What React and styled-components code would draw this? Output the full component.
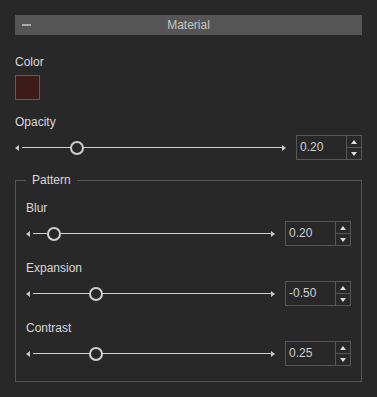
import React from "react";
import styled, { createGlobalStyle } from "styled-components";

const GlobalStyle = createGlobalStyle`
  html, body {
    margin: 0;
    background: #282828;
  }

  body {
    font-family: "Liberation Sans", Arial, sans-serif;
    font-size: 12px;
    color: #d8d8d8;
  }
`;

const Panel = styled.div`
  width: 377px;
  height: 397px;
  box-sizing: border-box;
  padding: 15px;
  display: flex;
  flex-direction: column;
`;

const Header = styled.div`
  height: 20px;
  background: #555555;
  display: grid;
  grid-template-columns: 1fr auto 1fr;
  align-items: center;
  line-height: 20px;
  color: #c4c4c4;
`;

const Collapse = styled.span`
  width: 9px;
  height: 2px;
  margin-left: 7px;
  background: #ababab;
`;

const Body = styled.div`
  display: flex;
  flex-direction: column;
  gap: 15px;
  padding-top: 20px;
`;

const Field = styled.div`
  display: flex;
  flex-direction: column;
`;

const Label = styled.div`
  line-height: 14px;
  margin-bottom: 6px;
`;

const Swatch = styled.div`
  width: 25px;
  height: 25px;
  box-sizing: border-box;
  border: 1px solid #5c5c5c;
  background: ${(p) => p.color};
`;

const Row = styled.div`
  display: flex;
  align-items: center;
  gap: 10px;
  height: 25px;
`;

const SliderWrap = styled.div`
  flex: 1;
  display: flex;
  align-items: center;
  height: 25px;
`;

const Arrow = styled.span`
  width: 0;
  height: 0;
  border-top: 3.5px solid transparent;
  border-bottom: 3.5px solid transparent;
  ${(p) =>
    p.dir === "left"
      ? "border-right: 4px solid #c8c8c8; margin-right: 3px;"
      : "border-left: 4px solid #c8c8c8;"}
`;

const Track = styled.div`
  flex: 1;
  position: relative;
  height: 1px;
  background: #d0d0d0;
`;

const Thumb = styled.span`
  position: absolute;
  top: 50%;
  width: 14px;
  height: 14px;
  box-sizing: border-box;
  border: 2px solid #cfcfcf;
  border-radius: 50%;
  background: #282828;
  transform: translate(-50%, -50%);
`;

const SpinBox = styled.div`
  width: 66px;
  height: 25px;
  box-sizing: border-box;
  border: 1px solid #575757;
  display: flex;
`;

const Value = styled.div`
  flex: 1;
  padding-left: 3px;
  line-height: 23px;
  color: #d0d0d0;
`;

const Spinner = styled.div`
  width: 14px;
  border-left: 1px solid #575757;
  display: flex;
  flex-direction: column;
`;

const SpinButton = styled.div`
  flex: 1;
  display: flex;
  align-items: center;
  justify-content: center;
  & + & {
    border-top: 1px solid #575757;
  }
`;

const SpinArrow = styled.span`
  width: 0;
  height: 0;
  border-left: 3px solid transparent;
  border-right: 3px solid transparent;
  ${(p) =>
    p.up
      ? "border-bottom: 4px solid #dcdcdc;"
      : "border-top: 4px solid #dcdcdc;"}
`;

const Group = styled.fieldset`
  margin: -2px 0 0;
  padding: 14px 10px 15px;
  border: 1px solid #555555;
  min-width: 0;
`;

const Legend = styled.legend`
  padding: 0 6px;
  line-height: 14px;
`;

const GroupBody = styled.div`
  display: flex;
  flex-direction: column;
  gap: 15px;
`;

const SliderField = ({ label, value, pct }) => (
  <Field>
    <Label>{label}</Label>
    <Row>
      <SliderWrap>
        <Arrow dir="left" />
        <Track>
          <Thumb style={{ left: `${pct}%` }} />
        </Track>
        <Arrow dir="right" />
      </SliderWrap>
      <SpinBox>
        <Value>{value}</Value>
        <Spinner>
          <SpinButton>
            <SpinArrow up />
          </SpinButton>
          <SpinButton>
            <SpinArrow />
          </SpinButton>
        </Spinner>
      </SpinBox>
    </Row>
  </Field>
);

const pattern = [
  { label: "Blur", value: "0.20", pct: 8.9 },
  { label: "Expansion", value: "-0.50", pct: 26.3 },
  { label: "Contrast", value: "0.25", pct: 26.3 },
];

const App = () => {
  return (
    <>
      <GlobalStyle />
      <Panel>
        <Header>
          <Collapse />
          <span>Material</span>
        </Header>
        <Body>
          <Field>
            <Label>Color</Label>
            <Swatch color="#3d1b17" />
          </Field>
          <SliderField label="Opacity" value="0.20" pct={21.3} />
          <Group>
            <Legend>Pattern</Legend>
            <GroupBody>
              {pattern.map((p) => (
                <SliderField key={p.label} {...p} />
              ))}
            </GroupBody>
          </Group>
        </Body>
      </Panel>
    </>
  );
};

export default App;
